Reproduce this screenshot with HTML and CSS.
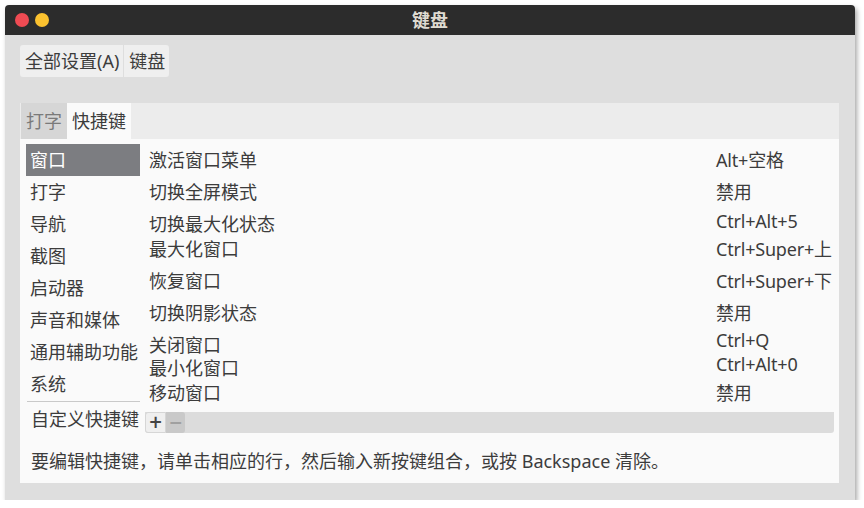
FILE: index.html
```html
<!DOCTYPE html>
<html lang="zh-CN">

<head>
    <meta charset="UTF-8">
    <title>键盘</title>
    <link rel="stylesheet" href="styles.css">
</head>

<body>
    <div class="window">
        <div class="titlebar">
            <div class="dots">
                <span class="dot close"></span>
                <span class="dot min"></span>
            </div>
            <div class="title">键盘</div>
            <div></div>
        </div>

        <div class="content">
            <div class="crumbs">
                <button class="crumb first">全部设置(A)</button>
                <button class="crumb last">键盘</button>
            </div>

            <div class="notebook">
                <div class="tabs">
                    <div class="tab">打字</div>
                    <div class="tab active">快捷键</div>
                </div>

                <div class="page">
                    <div class="split">
                        <div class="sidebar">
                            <div class="cats">
                                <div class="cat selected">窗口</div>
                                <div class="cat">打字</div>
                                <div class="cat">导航</div>
                                <div class="cat">截图</div>
                                <div class="cat">启动器</div>
                                <div class="cat">声音和媒体</div>
                                <div class="cat">通用辅助功能</div>
                                <div class="cat">系统</div>
                            </div>
                            <div class="sep"></div>
                            <div class="cat custom">自定义快捷键</div>
                        </div>

                        <div class="main">
                            <div class="shortcuts">
                                <div class="name">激活窗口菜单</div>
                                <div class="val">Alt+空格</div>

                                <div class="name">切换全屏模式</div>
                                <div class="val">禁用</div>

                                <div class="name">切换最大化状态</div>
                                <div class="val up3">Ctrl+Alt+5</div>

                                <div class="name">最大化窗口</div>
                                <div class="val">Ctrl+Super+上</div>

                                <div class="name">恢复窗口</div>
                                <div class="val">Ctrl+Super+下</div>

                                <div class="name">切换阴影状态</div>
                                <div class="val">禁用</div>

                                <div class="name">关闭窗口</div>
                                <div class="val up5">Ctrl+Q</div>

                                <div class="name">最小化窗口</div>
                                <div class="val up4">Ctrl+Alt+0</div>

                                <div class="name">移动窗口</div>
                                <div class="val">禁用</div>
                            </div>

                            <div class="toolbar">
                                <button class="tool add">+</button>
                                <button class="tool remove">−</button>
                            </div>
                        </div>
                    </div>

                    <p class="hint">要编辑快捷键，请单击相应的行，然后输入新按键组合，或按 Backspace 清除。</p>
                </div>
            </div>
        </div>
    </div>
</body>

</html>
```

FILE: styles.css
```css
body {
    margin: 0;
    background-color: white;
    color: #3c3c3c;
    font-family: "Noto Sans", "Noto Sans CJK SC", sans-serif;
    font-size: 18px;
}

.window {
    margin: 5px 0 0 5px;
    width: 850px;
    height: 495px;
    display: flex;
    flex-direction: column;
    border-radius: 4px 4px 0 0;
    overflow: hidden;
    box-shadow: 2px 3px 5px rgba(0, 0, 0, 0.35);
}

.titlebar {
    height: 30px;
    flex-shrink: 0;
    background-color: #2c2c2c;
    display: grid;
    grid-template-columns: 1fr auto 1fr;
    align-items: center;
}

.dots {
    display: flex;
    gap: 6px;
    padding-left: 10px;
}

.dot {
    width: 14px;
    height: 14px;
    border-radius: 50%;
}

.dot.close {
    background-color: #ef4b53;
}

.dot.min {
    background-color: #fbc22f;
}

.title {
    color: #dfdbd2;
    font-weight: bold;
    font-size: 18px;
    line-height: 30px;
}

.content {
    flex: 1;
    background-color: #dedede;
    padding: 10px 16px 0 15px;
    display: flex;
    flex-direction: column;
}

.crumbs {
    display: flex;
    gap: 1px;
    height: 32px;
}

.crumb {
    font: inherit;
    color: #3c3c3c;
    background-color: #efefef;
    border: none;
    padding: 0 4px 0 5px;
    height: 32px;
    line-height: 32px;
}

.crumb.first {
    border-radius: 3px 0 0 3px;
}

.crumb.last {
    border-radius: 0 3px 3px 0;
}

.notebook {
    margin-top: 26px;
    display: flex;
    flex-direction: column;
}

.tabs {
    height: 36px;
    background-color: #ececec;
    display: flex;
    padding-left: 1px;
}

.tab {
    line-height: 36px;
    padding: 0 5px;
    color: #3c3c3c;
    background-color: #fafafa;
}

.tab:first-child {
    color: #7a7a7a;
    background-color: #d6d6d6;
}

.page {
    height: 344px;
    background-color: #fafafa;
    padding: 5px 5px 0 6px;
    box-sizing: border-box;
    display: flex;
    flex-direction: column;
}

.split {
    display: flex;
    height: 289px;
}

.sidebar {
    width: 114px;
    display: flex;
    flex-direction: column;
}

.cats {
    flex-shrink: 0;
}

.cat {
    height: 32px;
    line-height: 32px;
    padding-left: 4px;
    white-space: nowrap;
}

.cat.selected {
    background-color: #7c7d81;
    color: white;
}

.sep {
    flex-shrink: 0;
    height: 1px;
    margin: 1px 0 0 1px;
    background-color: #c9c9c9;
}

.cat.custom {
    padding-left: 5px;
    height: 31px;
    line-height: 34px;
}

.main {
    flex: 1;
    margin-left: 5px;
    display: flex;
    flex-direction: column;
}

.shortcuts {
    display: grid;
    grid-template-columns: 1fr 118px;
    grid-template-rows: 32px 32px 25px 32px 32px 32px 23px 25px 24px;
    padding-top: 4px;
    line-height: 24px;
}

.name {
    padding-left: 4px;
    white-space: nowrap;
}

.val {
    white-space: nowrap;
    letter-spacing: -0.2px;
}

.val.up3 {
    margin-top: -3px;
}

.val.up4 {
    margin-top: -4px;
}

.val.up5 {
    margin-top: -5px;
}

.toolbar {
    margin-top: auto;
    height: 21px;
    flex-shrink: 0;
    background-color: #dcdcdc;
    border-radius: 0 0 3px 3px;
    display: flex;
}

.tool {
    width: 20px;
    height: 21px;
    padding: 0;
    border: none;
    font-family: "DejaVu Sans", sans-serif;
    font-size: 17px;
    font-weight: bold;
    line-height: 19px;
}

.tool.add {
    width: 21px;
    background-color: #efefef;
    border: 1px solid #d6d6d6;
    border-radius: 3px 0 0 3px;
    color: #444444;
}

.tool.remove {
    width: 19px;
    background-color: #c9c9c9;
    color: #a0a0a0;
    border-radius: 0 3px 3px 0;
}

.hint {
    margin: 16px 0 0 5px;
    line-height: 24px;
    white-space: nowrap;
}
```
